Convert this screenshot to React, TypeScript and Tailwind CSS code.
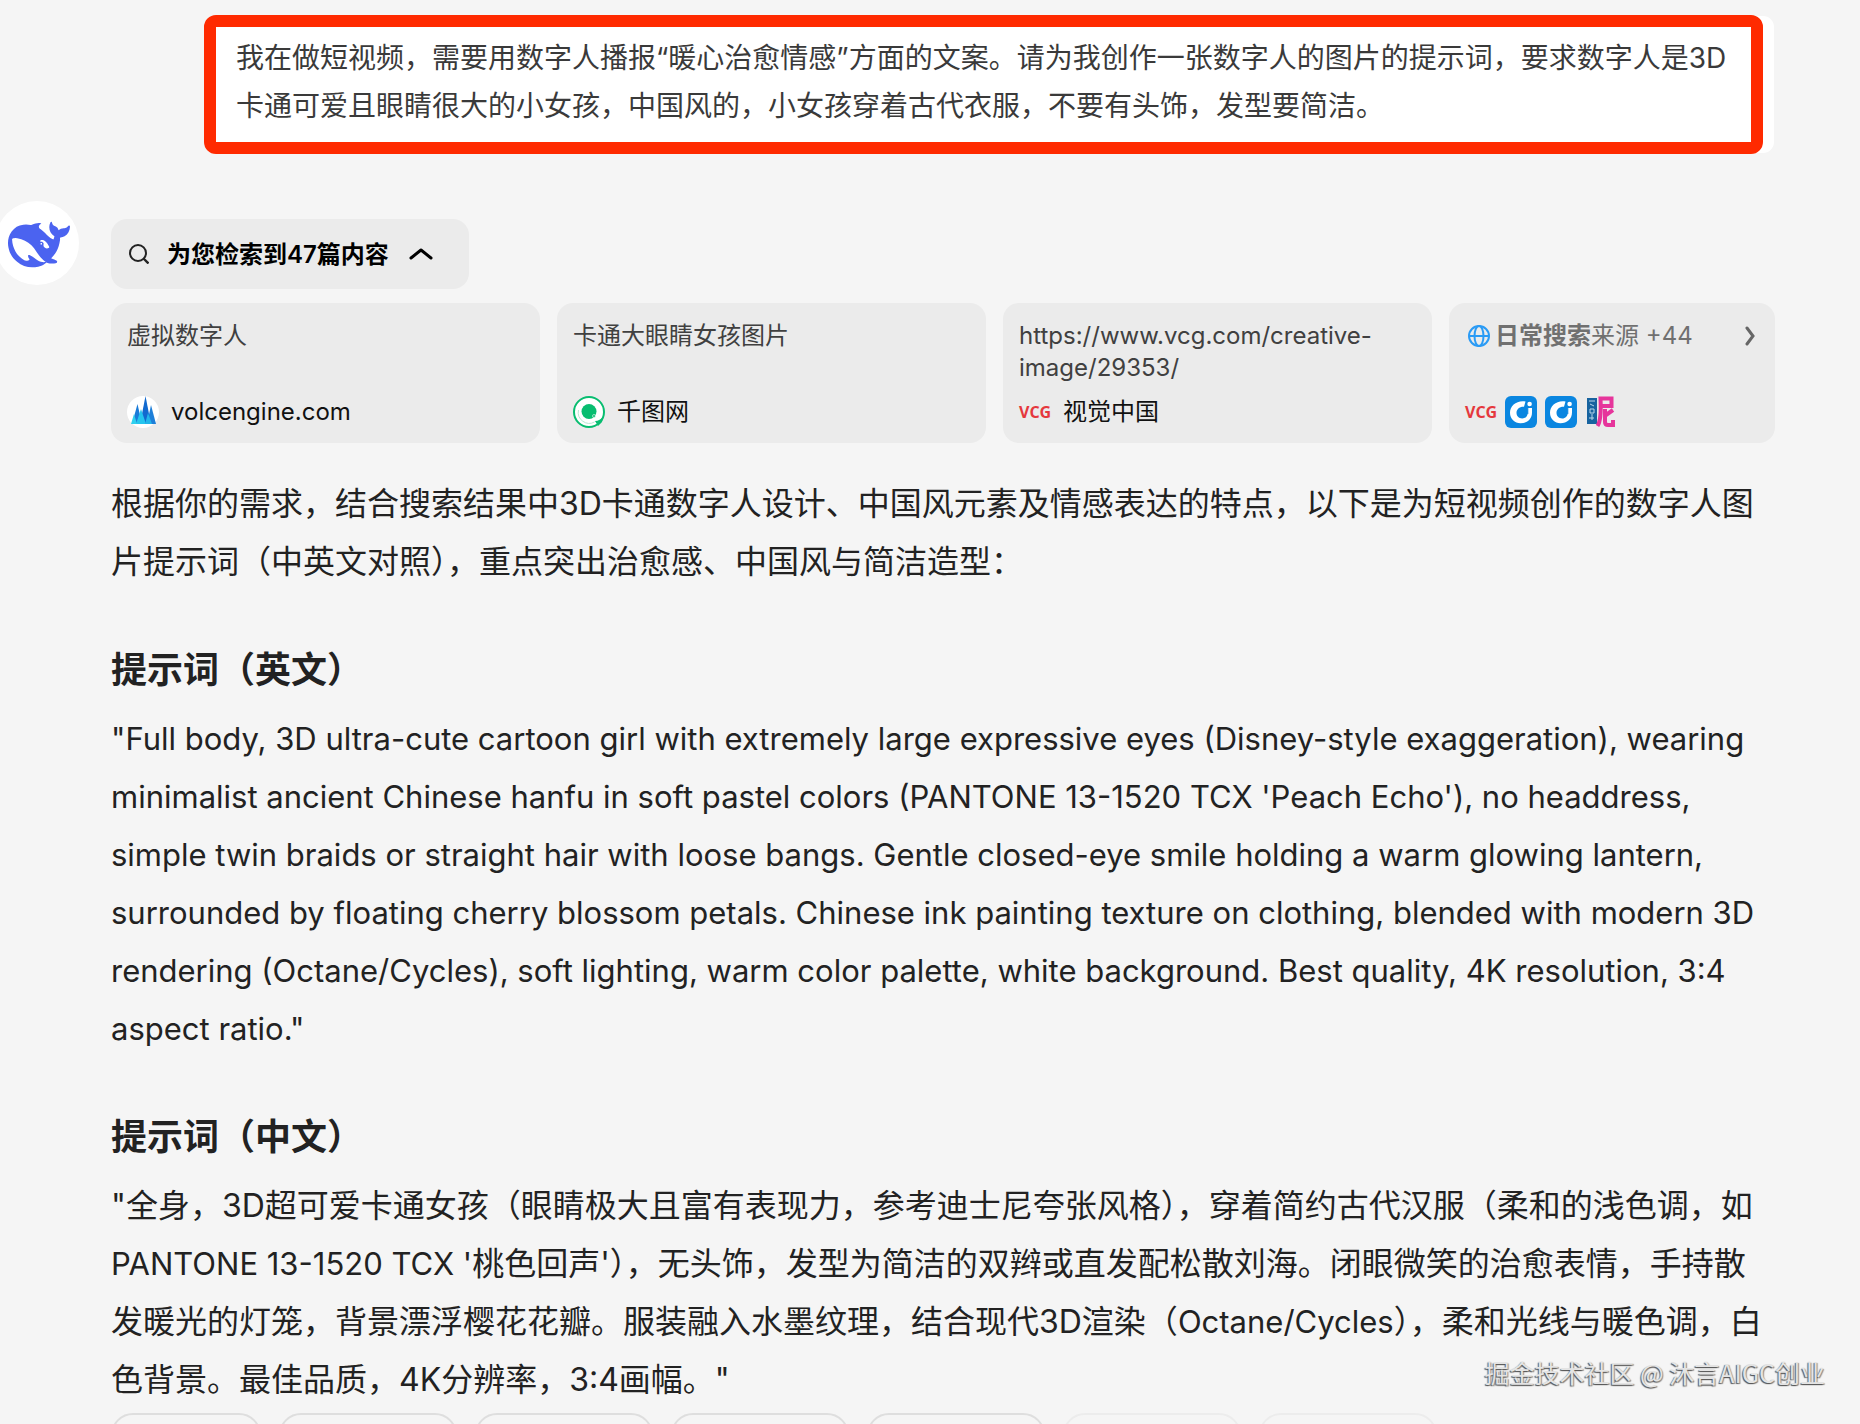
import type { ReactNode } from "react";

const WHALE =
  "M23.748 4.482c-.254-.124-.364.113-.512.234-.051.039-.094.09-.137.136-.372.397-.806.657-1.373.626-.829-.046-1.537.214-2.163.848-.133-.782-.575-1.248-1.247-1.548-.352-.156-.708-.311-.955-.65-.172-.241-.219-.51-.305-.774-.055-.16-.11-.323-.293-.35-.2-.031-.278.136-.356.276-.313.572-.434 1.202-.422 1.84.027 1.436.633 2.58 1.838 3.393.137.093.172.187.129.323-.082.28-.18.552-.266.833-.055.179-.137.217-.329.14a5.526 5.526 0 01-1.736-1.18c-.857-.828-1.631-1.742-2.597-2.458a11.365 11.365 0 00-.689-.471c-.985-.957.13-1.743.388-1.836.27-.098.093-.432-.779-.428-.872.004-1.67.295-2.687.684a3.055 3.055 0 01-.465.137 9.597 9.597 0 00-2.883-.102c-1.885.21-3.39 1.102-4.497 2.623C.082 8.606-.231 10.684.152 12.85c.403 2.284 1.569 4.175 3.36 5.653 1.858 1.533 3.997 2.284 6.438 2.14 1.482-.085 3.133-.284 4.994-1.86.47.234.962.327 1.78.397.63.059 1.236-.03 1.705-.128.735-.156.684-.837.419-.961-2.155-1.004-1.682-.595-2.113-.926 1.096-1.296 2.746-2.642 3.392-7.003.05-.347.007-.565 0-.845-.004-.17.035-.237.23-.256a4.173 4.173 0 001.545-.475c1.396-.763 1.96-2.015 2.093-3.517.02-.23-.004-.467-.247-.588zM11.581 18c-2.089-1.642-3.102-2.183-3.52-2.16-.392.024-.321.471-.235.763.09.288.207.486.371.739.114.167.192.416-.113.603-.673.416-1.842-.14-1.897-.167-1.361-.802-2.5-1.86-3.301-3.307-.774-1.393-1.224-2.887-1.298-4.482-.02-.386.093-.522.477-.592a4.696 4.696 0 011.529-.039c2.132.312 3.946 1.265 5.468 2.774.868.86 1.525 1.887 2.202 2.891.72 1.066 1.494 2.082 2.48 2.914.348.292.625.514.891.677-.802.09-2.14.11-3.054-.614zm1-6.44a.306.306 0 01.415-.287.302.302 0 01.2.288.306.306 0 01-.31.307.303.303 0 01-.304-.308zm3.11 1.596c-.2.081-.399.151-.59.16a1.245 1.245 0 01-.798-.254c-.274-.23-.47-.358-.552-.758a1.73 1.73 0 01.016-.588c.07-.327-.008-.537-.239-.727-.187-.156-.426-.199-.688-.199a.559.559 0 01-.254-.078c-.11-.054-.2-.19-.114-.358.028-.054.16-.186.192-.21.356-.202.767-.136 1.146.016.352.144.618.408 1.001.782.391.451.462.576.685.914.176.265.336.537.445.848.067.195-.019.354-.25.452z";

function VolcIcon() {
  return (
    <svg viewBox="0 0 32 32" className="size-8 shrink-0" aria-hidden="true">
      <circle cx="16" cy="16" r="16" fill="#fff" />
      <path d="M5 28 10.500 8 15 28Z" fill="#1a7bd8" />
      <path d="M13 28 18.500 0 24 28Z" fill="#1269cf" />
      <path d="M20 28 24 9 29 28Z" fill="#1d7fd9" />
      <path d="M9 28 14 13 19 28Z" fill="#25c5ee" />
      <path d="M18 28 21 17 25 28Z" fill="#22b5ea" />
      <path d="M4 28 7 18 10 28Z" fill="#2fd0ee" />
    </svg>
  );
}

function QiantuIcon() {
  return (
    <svg viewBox="0 0 32 32" className="size-8 shrink-0" aria-hidden="true">
      <circle cx="16" cy="16" r="15" fill="#fff" stroke="#08bd70" strokeWidth="2" />
      <circle cx="16" cy="15.500" r="7.500" fill="#08bd70" />
      <path d="M5.500 14a11 11 0 0 0 16 12" fill="none" stroke="#b5ead2" strokeWidth="1" />
      <circle cx="21" cy="20" r="1.500" fill="#08bd70" stroke="#fff" strokeWidth="0.600" />
      <path d="M22 25c3.500-.2 6-1.600 8-4l-1 5-4 4Z" fill="#08bd70" />
    </svg>
  );
}

function CiIcon() {
  return (
    <svg viewBox="0 0 32 32" className="size-8 shrink-0" aria-hidden="true">
      <rect width="32" height="32" rx="6" fill="#0a86e0" />
      <path d="M20.500 5.500C12 4 5 9.500 5 16.800 5 23 9.800 27.300 15.500 27.300 22 27.300 27 23 27 16.500V12h-4.200v4.500c0 3.500-2.300 6-5.600 6-3.400 0-5.700-2.500-5.700-5.700 0-3.600 2.800-6.300 7.500-6.100Z" fill="#fff" />
      <path d="M22.800 12v6" stroke="#0a86e0" strokeWidth="1" />
      <circle cx="24.600" cy="8" r="2.300" fill="#fff" />
    </svg>
  );
}

function NiIcon() {
  return (
    <svg viewBox="0 0 32 32" className="size-8 shrink-0" aria-hidden="true">
      <rect x="2" y="2" width="10" height="26" fill="#17639f" />
      <path d="M4 5h6M5 8l4 2M5 13h4v4H5ZM7 18v6M4 22h5" fill="none" stroke="#b9d7ea" strokeWidth="1" />
      <path d="M12.500 30C16.500 24 16 12 15.500 2.500h11v7.500H17" fill="none" stroke="#e6359b" strokeWidth="4" />
      <path d="M28 14 21 19M20 13v13q0 3 3 3h5v-5" fill="none" stroke="#e6359b" strokeWidth="4" />
    </svg>
  );
}

function Vcg() {
  return (
    <span className="w-8 shrink-0 text-center font-['Open_Sans'] text-[16px] leading-8 font-bold text-[#e5383d]">
      VCG
    </span>
  );
}

function Globe() {
  return (
    <svg viewBox="0 0 22 22" className="size-[22px] shrink-0" fill="none" stroke="#2a9bf5" strokeWidth="2" aria-hidden="true">
      <circle cx="11" cy="11" r="10" />
      <ellipse cx="11" cy="11" rx="4.500" ry="10" />
      <path d="M1 11h20" />
    </svg>
  );
}

function SourceCard({ title, site, icon }: { title: string; site: string; icon: ReactNode }) {
  return (
    <a href="#" className="flex min-w-0 flex-1 flex-col justify-between rounded-2xl bg-[#ebebeb] px-4 pt-[17px] pb-[15px]">
      <span className="leading-8 break-words text-[#404040]">{title}</span>
      <span className="flex items-center gap-3 leading-8 text-[#111]">
        {icon}
        {site}
      </span>
    </a>
  );
}

function Latin({ children }: { children: ReactNode }) {
  return <span className="text-[31px]">{children}</span>;
}

const pills = [
  { w: "w-[150px]", c: "border-[#dedede]" },
  { w: "w-[178px]", c: "border-[#dedede]" },
  { w: "w-[178px]", c: "border-[#dedede]" },
  { w: "w-[178px]", c: "border-[#dedede]" },
  { w: "w-[178px]", c: "border-[#dedede]" },
  { w: "w-[178px]", c: "border-[#ececec]" },
  { w: "w-[178px]", c: "border-[#ececec]" },
];

export default function App() {
  return (
    <main
      lang="zh-CN"
      className="relative flex h-screen flex-col overflow-hidden bg-[#f5f5f5] pt-[15px] pr-[85px] font-[Inter,'Noto_Sans_CJK_SC',sans-serif] text-[#222]"
    >
      <section className="mr-3 ml-[204px] rounded-xl border-12 border-[#ff2a00] bg-white px-5 pt-[7px] pb-3 text-[28px] leading-[48px] text-[#3a3a3a] shadow-[12px_0_0_-1px_#fff]">
        <p className="whitespace-nowrap">
          我在做短视频，需要用数字人播报“暖心治愈情感”方面的文案。请为我创作一张数字人的图片的提示词，要求数字人是3D
          <br />
          卡通可爱且眼睛很大的小女孩，中国风的，小女孩穿着古代衣服，不要有头饰，发型要简洁。
        </p>
      </section>

      <div className="mt-[47px] flex">
        <div className="-ml-[5px] flex size-[84px] shrink-0 items-center justify-center rounded-full bg-white pt-[3px] pl-[3px]">
          <svg viewBox="0 0 24 24" className="size-[62px]" fill="#4b63f0" role="img" aria-label="DeepSeek">
            <path d={WHALE} />
          </svg>
        </div>

        <div className="ml-8 min-w-0 flex-1 pt-[18px]">
          <button type="button" className="flex h-[70px] w-[358px] items-center rounded-2xl bg-[#ebebeb] pl-[18px] text-[24px] font-semibold text-black">
            <svg viewBox="0 0 20 20" className="size-5" fill="none" stroke="#222" strokeWidth="2" aria-hidden="true">
              <circle cx="9" cy="9" r="8" />
              <path d="m14.500 14.500 5 5" strokeWidth="2.400" />
            </svg>
            <span className="ml-[18px] pt-[2px]">为您检索到47篇内容</span>
            <svg viewBox="0 0 24 12" className="ml-5 h-3 w-6" fill="none" stroke="#000" strokeWidth="3" strokeLinecap="round" strokeLinejoin="round" aria-hidden="true">
              <path d="m2 10 10-8 10 8" />
            </svg>
          </button>

          <div className="mt-[14px] flex h-[140px] gap-[17px] text-[24px]">
            <SourceCard title="虚拟数字人" site="volcengine.com" icon={<VolcIcon />} />
            <SourceCard title="卡通大眼睛女孩图片" site="千图网" icon={<QiantuIcon />} />
            <SourceCard title="https://www.vcg.com/creative-image/29353/" site="视觉中国" icon={<Vcg />} />
            <a href="#" className="flex w-[326px] shrink-0 flex-col justify-between rounded-2xl bg-[#ebebeb] pt-[17px] pr-5 pb-[15px] pl-4 text-[#707070]">
              <span className="flex items-center leading-8">
                <span className="mr-[5px] ml-[3px]">
                  <Globe />
                </span>
                <span className="font-semibold">日常搜索</span>
                来源 +44
                <svg viewBox="0 0 10 20" className="ml-auto h-5 w-[10px]" fill="none" stroke="#666" strokeWidth="3" strokeLinecap="round" aria-hidden="true">
                  <path d="m2 2 6 8-6 8" />
                </svg>
              </span>
              <span className="flex items-center gap-2">
                <Vcg />
                <CiIcon />
                <CiIcon />
                <NiIcon />
              </span>
            </a>
          </div>

          <article className="mt-8 text-[32px] leading-[58px] whitespace-nowrap">
            <p>
              根据你的需求，结合搜索结果中3D卡通数字人设计、中国风元素及情感表达的特点，以下是为短视频创作的数字人图
              <br />
              片提示词（中英文对照），重点突出治愈感、中国风与简洁造型：
            </p>
            <h3 className="mt-[52px] text-[36px] leading-[54px] font-semibold">提示词（英文）</h3>
            <p className="mt-[13px] text-[31px]">
              "Full body, 3D ultra-cute cartoon girl with extremely large expressive eyes (Disney-style exaggeration), wearing
              <br />
              minimalist ancient Chinese hanfu in soft pastel colors (PANTONE 13-1520 TCX 'Peach Echo'), no headdress,
              <br />
              simple twin braids or straight hair with loose bangs. Gentle closed-eye smile holding a warm glowing lantern,
              <br />
              surrounded by floating cherry blossom petals. Chinese ink painting texture on clothing, blended with modern 3D
              <br />
              rendering (Octane/Cycles), soft lighting, warm color palette, white background. Best quality, 4K resolution, 3:4
              <br />
              aspect ratio."
            </p>
            <h3 className="mt-[52px] text-[36px] leading-[54px] font-semibold">提示词（中文）</h3>
            <p className="mt-[13px]">
              "全身，3D超可爱卡通女孩（眼睛极大且富有表现力，参考迪士尼夸张风格），穿着简约古代汉服（柔和的浅色调，如
              <br />
              <Latin>PANTONE 13-1520 TCX '</Latin>桃色回声'），无头饰，发型为简洁的双辫或直发配松散刘海。闭眼微笑的治愈表情，手持散
              <br />
              发暖光的灯笼，背景漂浮樱花花瓣。服装融入水墨纹理，结合现代3D渲染（<Latin>Octane/Cycles</Latin>），柔和光线与暖色调，白
              <br />
              色背景。最佳品质，4K分辨率，3:4画幅。"
            </p>
          </article>

          <div className="mt-1 flex gap-[18px]">
            {pills.map((p, i) => (
              <div key={i} className={`h-[60px] rounded-[22px] border-2 ${p.w} ${p.c}`} />
            ))}
          </div>
        </div>
      </div>

      <p className="absolute right-[35px] bottom-[34px] font-['Noto_Sans_CJK_SC',sans-serif] text-[25px] leading-9 text-[#e4e4e4] [text-shadow:-1px_1px_1px_#555,1px_1px_1px_#888]">
        掘金技术社区 @ 沐言AIGC创业
      </p>
    </main>
  );
}
